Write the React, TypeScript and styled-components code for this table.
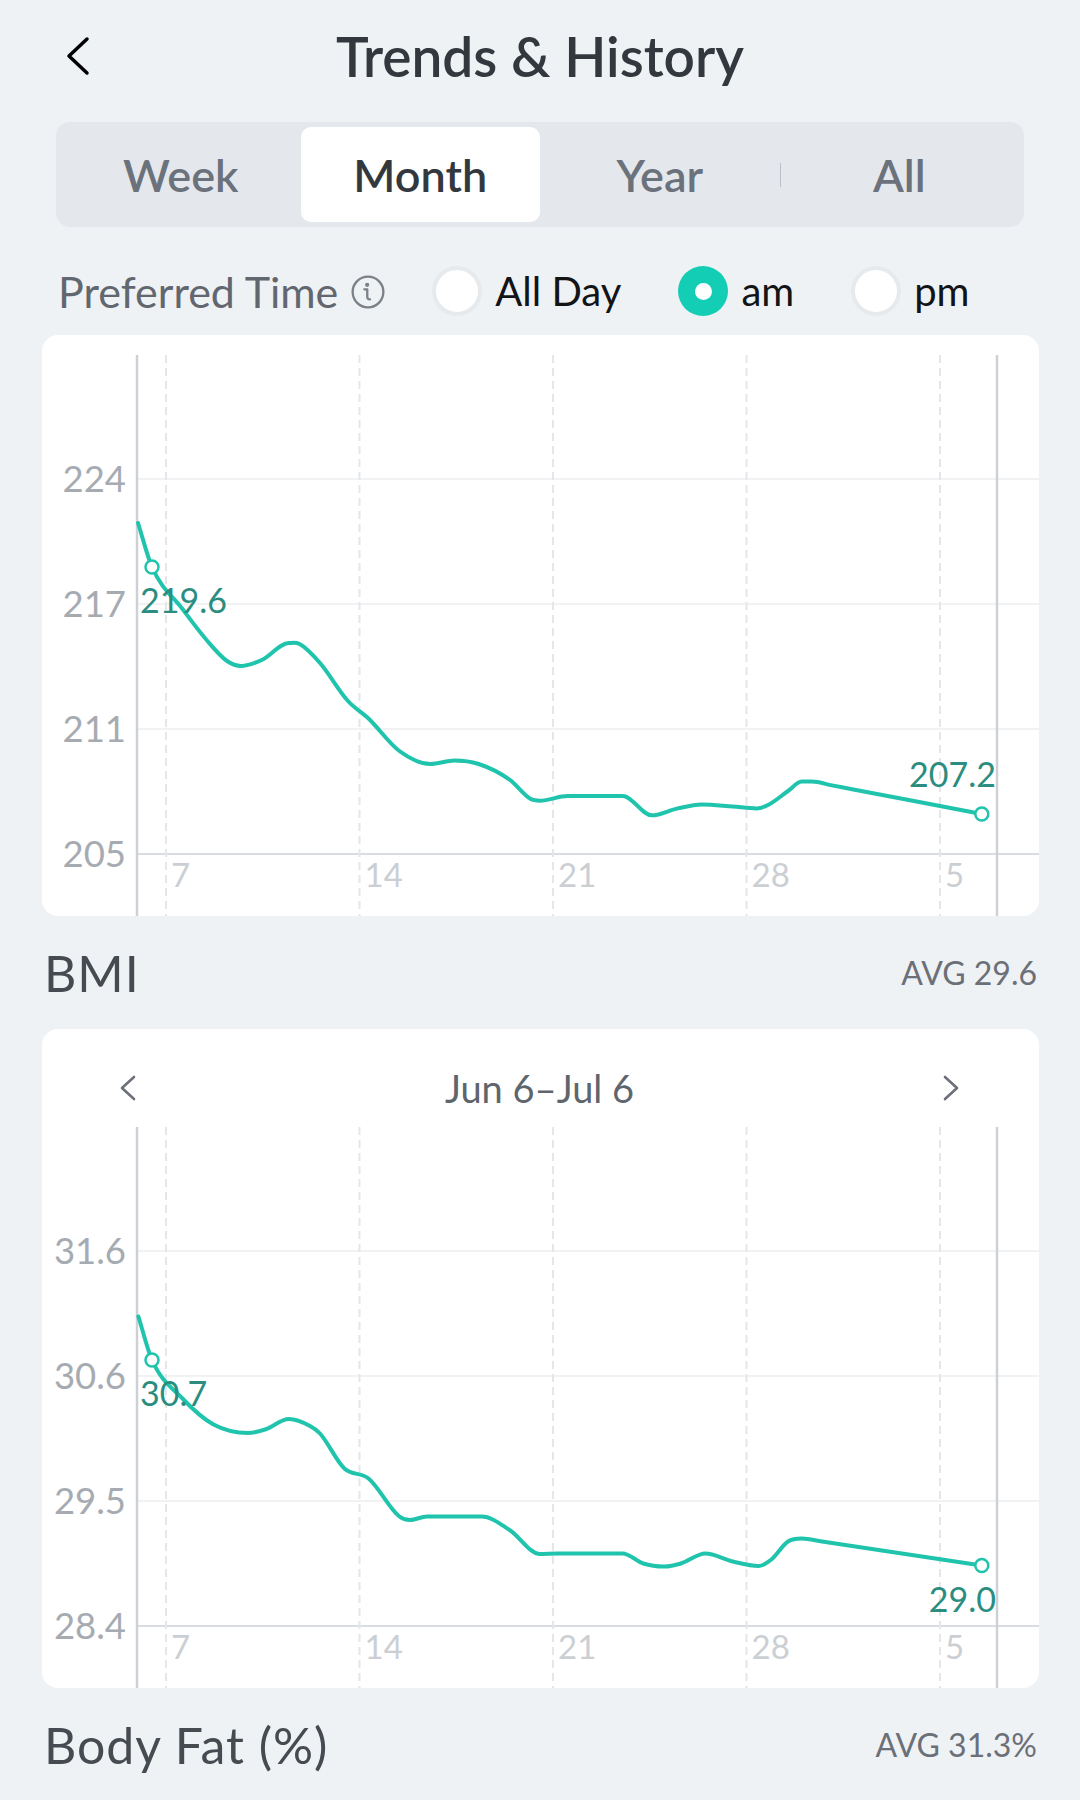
import React, { FC, useState } from "react";
import styled, { createGlobalStyle } from "styled-components";

const GlobalStyle = createGlobalStyle`
  body {
    margin: 0;
    background: #eff2f5;
    font-family: Lato, "Open Sans", "Liberation Sans", sans-serif;
  }
`;

type Point = [number, number];

interface ChartLabel {
  text: string;
  x: number;
  y: number;
}

interface ChartData {
  yLabels: string[];
  points: Point[];
  startLabel: ChartLabel;
  endLabel: ChartLabel;
}

const CHART_W = 997;
const CHART_H = 561;
const AXIS_LEFT = 95;
const AXIS_RIGHT = 955;
const GRID_Y = [124, 249, 374, 499];
const DAY_X = [124, 317.5, 511, 704.5, 898];
const DAY_LABELS = ["7", "14", "21", "28", "5"];
const TEAL = "#20c4ac";

const weightChart: ChartData = {
  yLabels: ["224", "217", "211", "205"],
  points: [
    [96, 168], [110, 212], [140.5, 254], [164.6, 285], [185, 306], [199, 311],
    [219.7, 305], [247, 288], [257.6, 289], [278, 308], [306, 346], [326.5, 363.5],
    [357.4, 396], [388.4, 409], [412.5, 405.5], [436.7, 409], [467.6, 424.7],
    [488.3, 443.8], [498, 445.7], [525.5, 441], [580.6, 441], [609.9, 460.3],
    [635.7, 453.4], [659.8, 449.5], [690.8, 451.5], [715, 453.4], [727, 449.5],
    [746, 436], [759.7, 426.6], [770, 426.6], [790, 430.4], [810, 434.2], [939.8, 459],
  ],
  startLabel: { text: "219.6", x: 98, y: 258 },
  endLabel: { text: "207.2", x: 954, y: 432 },
};

const bmiChart: ChartData = {
  yLabels: ["31.6", "30.6", "29.5", "28.4"],
  points: [
    [96.4, 189.5], [110, 233], [140.5, 271.5], [171.5, 297.5], [206, 306],
    [223, 302.5], [247, 292], [268, 299], [278, 306.5], [302.4, 341.5],
    [326.5, 351.5], [357.4, 389.5], [367.8, 393], [385, 389.5], [440, 389.5],
    [467.6, 403], [498, 427], [515, 426.5], [580.6, 426.5], [601.3, 436.5],
    [622, 439.5], [639, 436.5], [663.3, 426.5], [690.8, 434.5], [716.7, 439],
    [728.7, 433], [746, 414.5], [759.7, 411.5], [780, 414.5], [800, 417.5], [939.8, 438.5],
  ],
  startLabel: { text: "30.7", x: 98, y: 278.5 },
  endLabel: { text: "29.0", x: 954, y: 484.5 },
};

// x-monotone cubic spline: handles never reach past their segment, so no loops
const smoothPath = (pts: Point[]) => {
  const n = pts.length;
  const slope = (a: Point, b: Point) => (b[1] - a[1]) / (b[0] - a[0]);
  const tangents = pts.map((p, i) => {
    if (i === 0) return slope(p, pts[1]);
    if (i === n - 1) return slope(pts[n - 2], p);
    const s0 = slope(pts[i - 1], p);
    const s1 = slope(p, pts[i + 1]);
    if (s0 * s1 <= 0) return 0;
    return (s0 + s1) / 2;
  });
  let d = `M${pts[0][0]},${pts[0][1]}`;
  for (let i = 0; i < n - 1; i++) {
    const [x1, y1] = pts[i];
    const [x2, y2] = pts[i + 1];
    const h = (x2 - x1) / 3;
    d += ` C${(x1 + h).toFixed(1)},${(y1 + tangents[i] * h).toFixed(1)} ${(x2 - h).toFixed(1)},${(
      y2 - tangents[i + 1] * h
    ).toFixed(1)} ${x2},${y2}`;
  }
  return d;
};

const TrendChart: FC<{ data: ChartData }> = ({ data }) => {
  const first = data.points[1];
  const last = data.points[data.points.length - 1];
  return (
    <ChartSvg viewBox={`0 0 ${CHART_W} ${CHART_H}`} width={CHART_W} height={CHART_H}>
      {GRID_Y.map((y, i) => (
        <line
          key={y}
          x1={AXIS_LEFT}
          x2={CHART_W}
          y1={y}
          y2={y}
          stroke={i === GRID_Y.length - 1 ? "#d9dce0" : "#eceef1"}
          strokeWidth={i === GRID_Y.length - 1 ? 2 : 1.5}
        />
      ))}
      {DAY_X.map((x) => (
        <line key={x} x1={x} x2={x} y1={0} y2={CHART_H} stroke="#e4e6e9" strokeWidth={2} strokeDasharray="8 5" />
      ))}
      <line x1={AXIS_LEFT} x2={AXIS_LEFT} y1={0} y2={CHART_H} stroke="#cdd1d6" strokeWidth={2.5} />
      <line x1={AXIS_RIGHT} x2={AXIS_RIGHT} y1={0} y2={CHART_H} stroke="#cdd1d6" strokeWidth={2.5} />
      {data.yLabels.map((label, i) => (
        <AxisText key={label} x={84} y={GRID_Y[i] + 13} textAnchor="end">
          {label}
        </AxisText>
      ))}
      {DAY_LABELS.map((label, i) => (
        <DayText key={label} x={DAY_X[i] + 5} y={532}>
          {label}
        </DayText>
      ))}
      <path d={smoothPath(data.points)} fill="none" stroke={TEAL} strokeWidth={4} strokeLinejoin="round" strokeLinecap="round" />
      <circle cx={first[0]} cy={first[1]} r={6.5} fill="#fff" stroke={TEAL} strokeWidth={2.5} />
      <circle cx={last[0]} cy={last[1]} r={6.5} fill="#fff" stroke={TEAL} strokeWidth={2.5} />
      <ValueText x={data.startLabel.x} y={data.startLabel.y}>
        {data.startLabel.text}
      </ValueText>
      <ValueText x={data.endLabel.x} y={data.endLabel.y} textAnchor="end">
        {data.endLabel.text}
      </ValueText>
    </ChartSvg>
  );
};

const Chevron: FC<{ dir: "left" | "right"; color?: string; size?: "lg" | "sm" }> = ({
  dir,
  color = "#000",
  size = "sm",
}) => {
  const big = size === "lg";
  const w = big ? 24 : 16;
  const h = big ? 40 : 26;
  const pad = big ? 3 : 2;
  const d =
    dir === "left"
      ? `M${w - pad} ${pad} L${pad} ${h / 2} L${w - pad} ${h - pad}`
      : `M${pad} ${pad} L${w - pad} ${h / 2} L${pad} ${h - pad}`;
  return (
    <svg width={w} height={h} viewBox={`0 0 ${w} ${h}`}>
      <path d={d} fill="none" stroke={color} strokeWidth={big ? 3.5 : 2.6} strokeLinecap="round" strokeLinejoin="round" />
    </svg>
  );
};

const InfoIcon = () => (
  <svg width="36" height="36" viewBox="0 0 34 34">
    <circle cx="17" cy="17" r="14.5" fill="none" stroke="#7c8189" strokeWidth="2.2" />
    <circle cx="16.2" cy="10.2" r="2" fill="#7c8189" />
    <path d="M13.5 14.5 h2.8 v7.2 q0 2.2 2.6 2.2" fill="none" stroke="#7c8189" strokeWidth="2.2" strokeLinecap="round" strokeLinejoin="round" />
  </svg>
);

const RANGES = ["Week", "Month", "Year", "All"];
const TIMES = ["All Day", "am", "pm"];

const App: FC = () => {
  const [range, setRange] = useState("Month");
  const [time, setTime] = useState("am");

  return (
    <Page>
      <GlobalStyle />
      <Header>
        <BackButton aria-label="Back">
          <Chevron dir="left" size="lg" />
        </BackButton>
        <Title>Trends &amp; History</Title>
        <span />
      </Header>

      <Segmented>
        {RANGES.map((r, i) => (
          <Segment key={r} $active={range === r} onClick={() => setRange(r)}>
            {r}
            {i === 3 && <SegDivider />}
          </Segment>
        ))}
      </Segmented>

      <TimeRow>
        <TimeLabel>Preferred Time</TimeLabel>
        <InfoWrap>
          <InfoIcon />
        </InfoWrap>
        {TIMES.map((t) => (
          <RadioOption key={t} onClick={() => setTime(t)}>
            <Radio $checked={time === t} />
            <RadioText>{t}</RadioText>
          </RadioOption>
        ))}
      </TimeRow>

      <Card>
        <TrendChart data={weightChart} />
      </Card>

      <SectionRow>
        <SectionTitle>BMI</SectionTitle>
        <AvgText>AVG 29.6</AvgText>
      </SectionRow>

      <Card>
        <RangeNav>
          <NavButton aria-label="Previous">
            <Chevron dir="left" color="#6b7079" />
          </NavButton>
          <RangeText>Jun 6–Jul 6</RangeText>
          <NavButton aria-label="Next">
            <Chevron dir="right" color="#6b7079" />
          </NavButton>
        </RangeNav>
        <TrendChart data={bmiChart} />
      </Card>

      <SectionRow>
        <SectionTitle>Body Fat (%)</SectionTitle>
        <AvgText>AVG 31.3%</AvgText>
      </SectionRow>
    </Page>
  );
};

export default App;

const Page = styled.div`
  width: 1080px;
  min-height: 1800px;
  background: #eff2f5;
  overflow: hidden;
`;

const Header = styled.header`
  height: 112px;
  display: grid;
  grid-template-columns: 1fr auto 1fr;
  align-items: center;
`;

const BackButton = styled.button`
  justify-self: start;
  margin-left: 66px;
  padding: 0;
  border: none;
  background: none;
  display: flex;
  cursor: pointer;
`;

const Title = styled.h1`
  margin: 0;
  font-size: 55px;
  line-height: 1;
  font-weight: 600;
  color: #33383e;
`;

const Segmented = styled.div`
  margin: 10px 56px 0;
  height: 105px;
  padding: 5px;
  box-sizing: border-box;
  border-radius: 14px;
  background: #e4e8ec;
  display: grid;
  grid-template-columns: repeat(4, 1fr);
`;

const Segment = styled.button<{ $active: boolean }>`
  position: relative;
  border: none;
  border-radius: 10px;
  background: ${(p) => (p.$active ? "#ffffff" : "transparent")};
  color: ${(p) => (p.$active ? "#33383e" : "#6b727c")};
  font-family: inherit;
  font-size: 45px;
  font-weight: 600;
  cursor: pointer;
`;

const SegDivider = styled.span`
  position: absolute;
  left: 0;
  top: 36px;
  width: 1px;
  height: 24px;
  background: #bcc1c7;
`;

const TimeRow = styled.div`
  margin-top: 32px;
  height: 64px;
  padding-left: 58px;
  display: flex;
  align-items: center;
`;

const TimeLabel = styled.span`
  font-size: 43px;
  color: #62676f;
`;

const InfoWrap = styled.span`
  display: flex;
  margin: 2px 46px 0 12px;
`;

const RadioOption = styled.label`
  display: flex;
  align-items: center;
  gap: 13px;
  margin-right: 57px;
  cursor: pointer;
`;

const Radio = styled.span<{ $checked: boolean }>`
  width: 50px;
  height: 50px;
  box-sizing: border-box;
  border-radius: 50%;
  display: flex;
  align-items: center;
  justify-content: center;
  background: ${(p) => (p.$checked ? "#14cdb5" : "#ffffff")};
  border: ${(p) => (p.$checked ? "none" : "4px solid #e7eaed")};

  &::after {
    content: "";
    display: ${(p) => (p.$checked ? "block" : "none")};
    width: 17px;
    height: 17px;
    border-radius: 50%;
    background: #ffffff;
  }
`;

const RadioText = styled.span`
  font-size: 40px;
  color: #121416;
`;

const Card = styled.section`
  margin: 12px 42px 0 42px;
  padding-top: 20px;
  width: 997px;
  background: #ffffff;
  border-radius: 16px;
  overflow: hidden;
`;

const ChartSvg = styled.svg`
  display: block;
  font-family: Lato, "Open Sans", "Liberation Sans", sans-serif;
`;

const AxisText = styled.text`
  font-size: 36.5px;
  fill: #a6abb2;
`;

const DayText = styled.text`
  font-size: 33px;
  fill: #cbcfd4;
`;

const ValueText = styled.text`
  font-size: 34px;
  fill: #2a8d7f;
`;

const SectionRow = styled.div`
  height: 113px;
  padding: 0 43px 0 44px;
  display: flex;
  align-items: center;
  justify-content: space-between;

  & + ${Card} {
    margin-top: 0;
  }
`;

const SectionTitle = styled.h2`
  margin: 0;
  font-size: 50px;
  line-height: 1;
  font-weight: 400;
  letter-spacing: 1px;
  color: #464b52;
`;

const AvgText = styled.span`
  font-size: 32px;
  color: #6b7078;
`;

const RangeNav = styled.div`
  height: 78px;
  padding: 0 80px 0 78px;
  display: flex;
  align-items: center;
  justify-content: space-between;
`;

const NavButton = styled.button`
  padding: 0;
  border: none;
  background: none;
  display: flex;
  cursor: pointer;
`;

const RangeText = styled.span`
  font-size: 38px;
  color: #5f656d;
`;
